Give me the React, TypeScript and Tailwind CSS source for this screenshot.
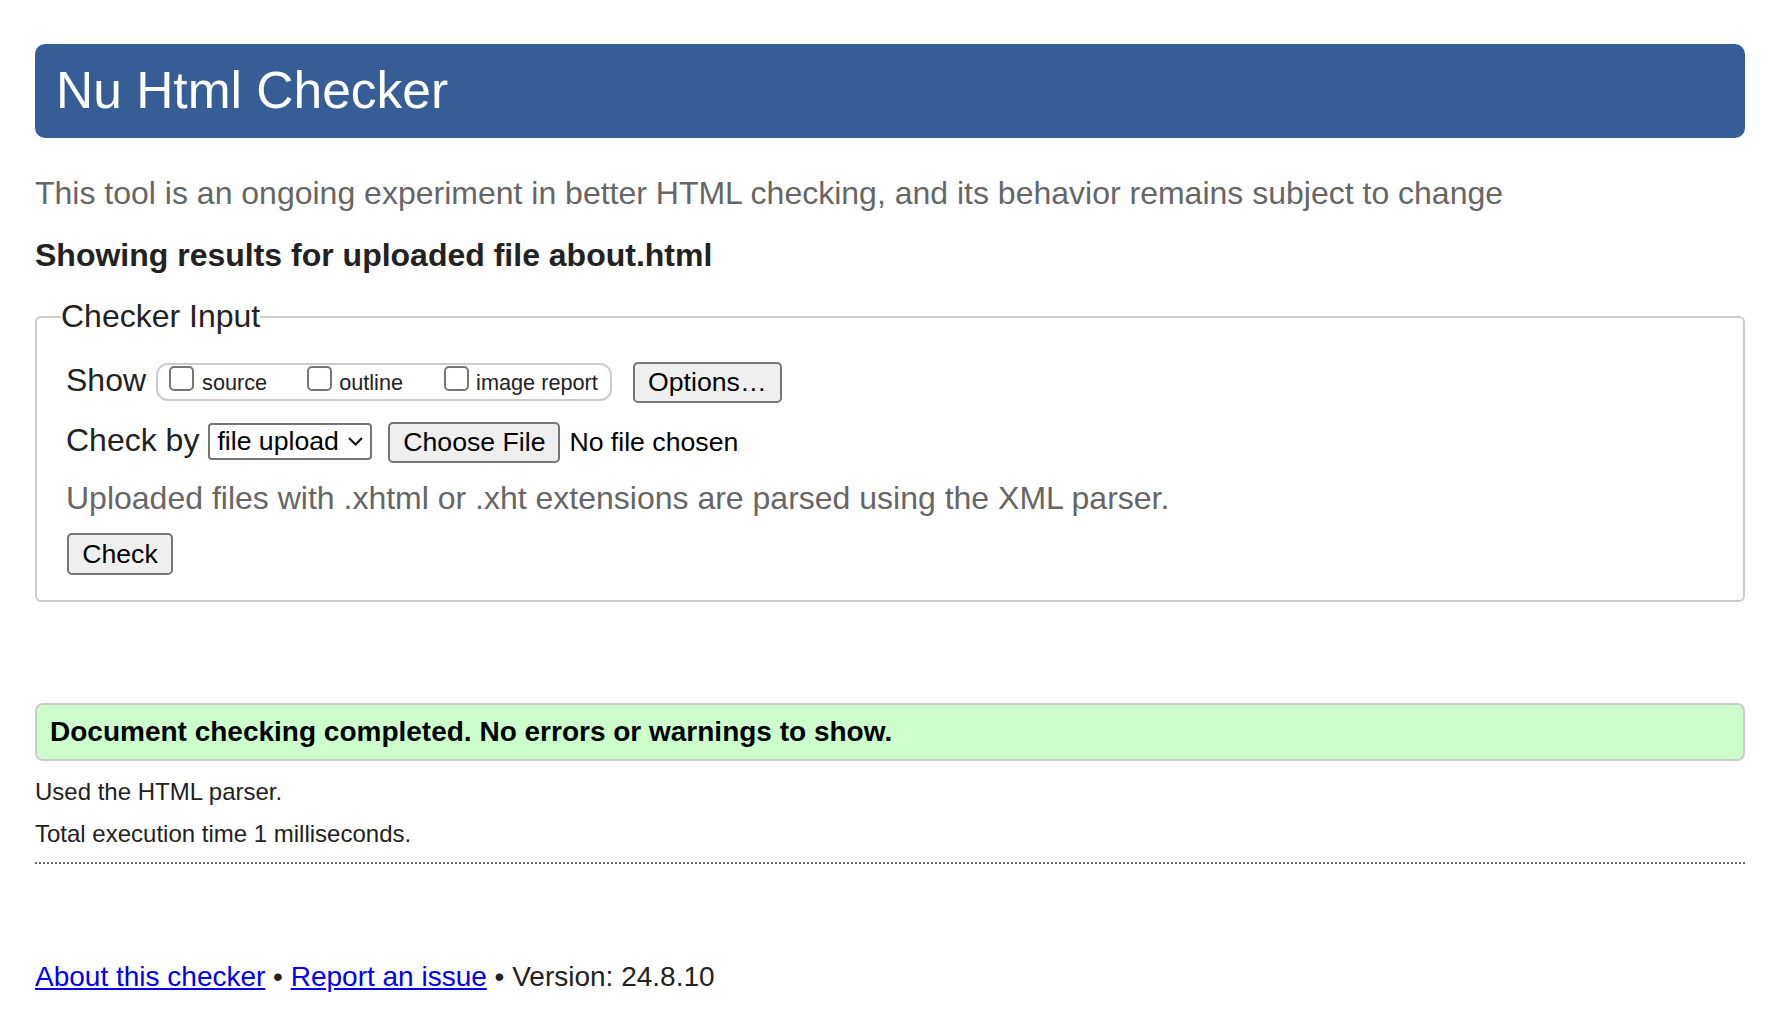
import React from "react";

function Box() {
  return <span className="block w-[25px] h-[25px] border-2 border-[#767676] rounded-[5px] bg-white shrink-0" />;
}

export default function App() {
  return (
    <div className="min-h-[1030px] bg-white font-['Liberation_Sans',Arial,sans-serif] text-[#222] pl-[35px] pr-[27px] pt-[44px]">
      <h1 className="h-[94px] rounded-[10px] bg-[#365d95] flex items-center pl-[21px] text-white text-[51.5px] leading-none font-normal">
        Nu Html Checker
      </h1>
      <p className="mt-[37px] text-[32px] leading-[37px] text-[#666]">
        This tool is an ongoing experiment in better HTML checking, and its behavior remains subject to change
      </p>
      <h2 className="mt-[25px] text-[32px] leading-[37px] font-bold">Showing results for uploaded file about.html</h2>
      <fieldset className="mt-[24px] border-2 border-[#ccc] rounded-[6px] pl-[29px] pr-[20px] pt-[25px] pb-[25px]">
        <legend className="-ml-[5px] text-[32px] leading-[37px] p-0">Checker Input</legend>
        <div className="flex items-start h-[60px]">
          <span className="mt-[2px] text-[32px] leading-[37px]">Show</span>
          <div className="ml-[10px] mt-[3px] h-[38px] rounded-[12px] border-2 border-[#ccc] flex items-start pl-[11px] pr-[12px] text-[21.7px] leading-[25px]">
            <span className="mt-[1px]"><Box /></span>
            <span className="ml-[8px] mt-[5px]">source</span>
            <span className="ml-[40px] mt-[1px]"><Box /></span>
            <span className="ml-[7px] mt-[5px]">outline</span>
            <span className="ml-[41px] mt-[1px]"><Box /></span>
            <span className="ml-[7px] mt-[5px]">image report</span>
          </div>
          <button className="ml-[21px] mt-[2px] h-[41px] w-[149px] bg-[#efefef] border-2 border-[#767676] rounded-[5px] text-[26.67px] leading-none text-black flex items-center justify-center">
            Options…
          </button>
        </div>
        <div className="flex items-start h-[60px]">
          <span className="mt-[2px] text-[32px] leading-[37px]">Check by</span>
          <div className="ml-[9px] mt-[3px] h-[37px] w-[164px] border-2 border-[#767676] rounded-[4px] bg-white flex items-center justify-between pl-[7px] pr-[7px] text-[26.67px] leading-none text-black">
            <span>file upload</span>
            <svg width="15" height="9" viewBox="0 0 15 9" className="shrink-0">
              <path d="M1 1 L7.5 7.5 L14 1" fill="none" stroke="#111" strokeWidth="2" />
            </svg>
          </div>
          <button className="ml-[16px] mt-[2px] h-[41px] w-[172px] bg-[#efefef] border-2 border-[#767676] rounded-[5px] text-[26.67px] leading-none text-black flex items-center justify-center">
            Choose File
          </button>
          <span className="ml-[9px] mt-[2px] h-[41px] flex items-center text-[26.67px] leading-none text-black">No file chosen</span>
        </div>
        <p className="text-[32px] leading-[37px] text-[#666]">
          Uploaded files with .xhtml or .xht extensions are parsed using the XML parser.
        </p>
        <button className="mt-[16px] ml-[1px] h-[42px] w-[106px] bg-[#efefef] border-2 border-[#767676] rounded-[5px] text-[26.67px] leading-none text-black flex items-center justify-center">
          Check
        </button>
      </fieldset>
      <div className="mt-[101px] h-[58px] bg-[#ccffcc] border-2 border-[#ccc] rounded-[8px] flex items-center pl-[13px] text-[28px] font-bold text-black">
        Document checking completed. No errors or warnings to show.
      </div>
      <p className="mt-[17px] text-[24px] leading-[28px]">Used the HTML parser.</p>
      <p className="mt-[14px] text-[24px] leading-[28px]">Total execution time 1 milliseconds.</p>
      <div className="mt-[14px] border-t-2 border-dotted border-[#666]" />
      <p className="mt-[97px] text-[28px] leading-[32px]">
        <a href="#" className="text-[#0000ee] underline">About this checker</a>
        {" • "}
        <a href="#" className="text-[#0000ee] underline">Report an issue</a>
        {" • Version: 24.8.10"}
      </p>
    </div>
  );
}
